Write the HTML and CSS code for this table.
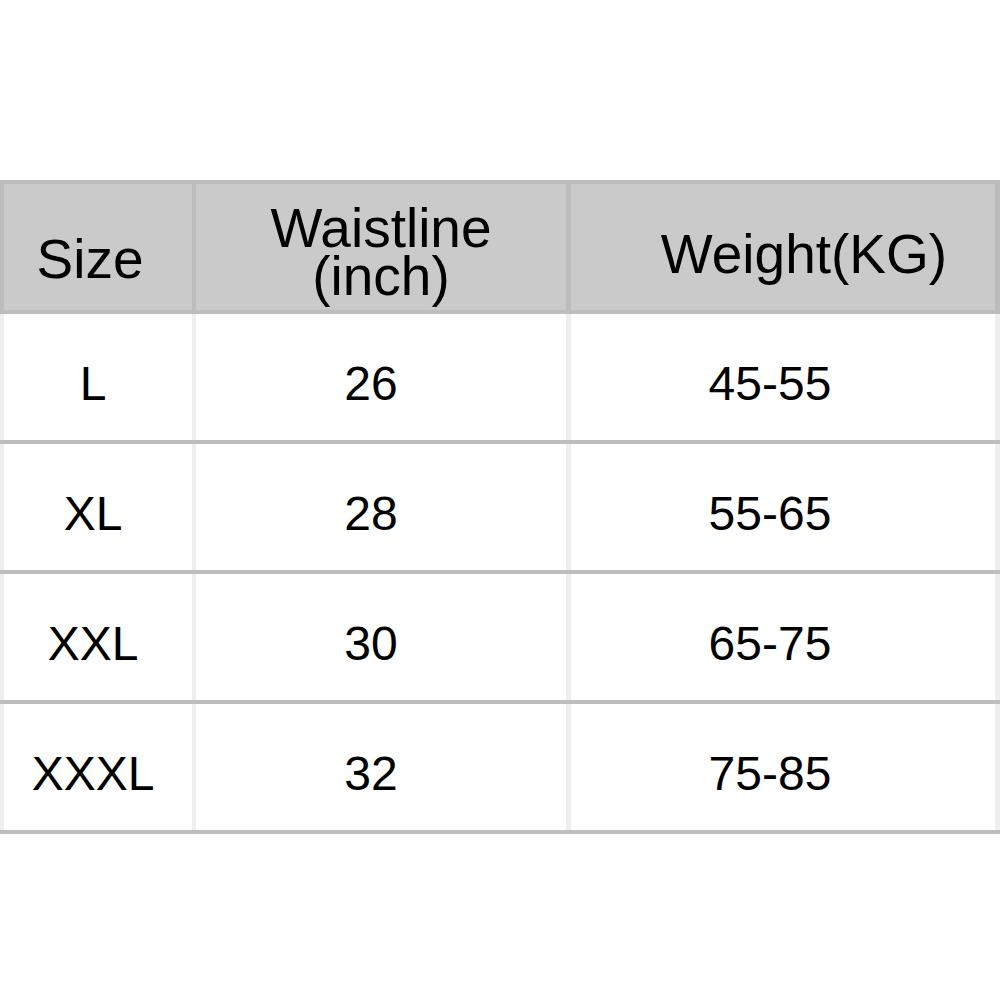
FILE: index.html
```html
<!DOCTYPE html>
<html>
<head>
<meta charset="utf-8">
<link rel="stylesheet" href="styles.css">
</head>
<body>
<div class="table">
  <div class="row head">
    <div class="cell c1"><span class="size-h">Size</span></div>
    <div class="cell c2"><span class="waist-h">Waistline<br>(inch)</span></div>
    <div class="cell c3"><span class="weight-h">Weight(KG)</span></div>
  </div>
  <div class="row">
    <div class="cell c1">L</div>
    <div class="cell c2">26</div>
    <div class="cell c3">45-55</div>
  </div>
  <div class="row">
    <div class="cell c1">XL</div>
    <div class="cell c2">28</div>
    <div class="cell c3">55-65</div>
  </div>
  <div class="row">
    <div class="cell c1">XXL</div>
    <div class="cell c2">30</div>
    <div class="cell c3">65-75</div>
  </div>
  <div class="row">
    <div class="cell c1">XXXL</div>
    <div class="cell c2">32</div>
    <div class="cell c3">75-85</div>
  </div>
</div>
</body>
</html>
```
FILE: styles.css
```css
html, body {
  margin: 0;
  padding: 0;
  background: #ffffff;
}
body {
  font-family: "Liberation Sans", Arial, sans-serif;
  color: #000000;
}
.table {
  margin-top: 180px;
  width: 1000px;
  border-top: 4px solid #bdbdbd;
}
.row {
  display: grid;
  grid-template-columns: 192px 374px 434px;
  border-bottom: 4px solid #bdbdbd;
}
.cell {
  box-sizing: content-box;
  border-left: 4px solid #eeeeee;
  text-align: center;
  font-size: 48px;
  line-height: 48px;
  height: 80px;
  padding-top: 46px;
}
.c1 { padding-right: 10px; width: 178px; }
.c2 { padding-right: 20px; width: 350px; }
.c3 {
  border-left-width: 5px;
  border-right: 5px solid #eeeeee;
  padding-right: 26px;
  width: 398px;
}
.row.head {
  background: #cbcacb;
}
.row.head .cell {
  border-color: #bdbcbd;
  font-size: 55px;
  height: 126px;
  padding-top: 0;
  padding-right: 0;
  display: flex;
  align-items: flex-start;
  justify-content: center;
}
.row.head .c1 { width: 172px; padding-right: 16px; }
.row.head .c2 { width: 370px; }
.row.head .c3 { width: 382px; padding-left: 42px; }
.size-h {
  display: block;
  line-height: 40px;
  margin-top: 55px;
}
.waist-h {
  display: block;
  line-height: 48px;
  margin-top: 20px;
}
.weight-h {
  display: block;
  line-height: 40px;
  margin-top: 50px;
}
```
